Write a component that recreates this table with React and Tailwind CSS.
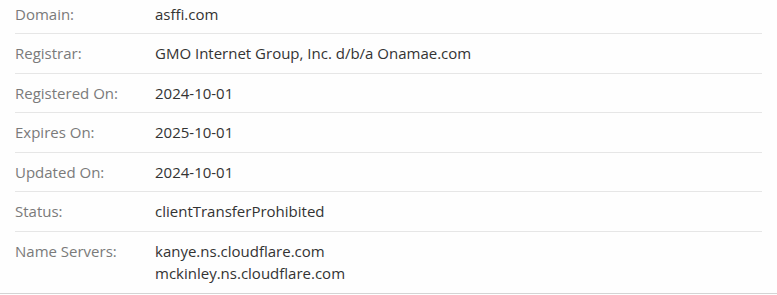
export default function App() {
  const rows = [
    ["Domain:", ["asffi.com"]],
    ["Registrar:", ["GMO Internet Group, Inc. d/b/a Onamae.com"]],
    ["Registered On:", ["2024-10-01"]],
    ["Expires On:", ["2025-10-01"]],
    ["Updated On:", ["2024-10-01"]],
    ["Status:", ["clientTransferProhibited"]],
    ["Name Servers:", ["kanye.ns.cloudflare.com", "mckinley.ns.cloudflare.com"]],
  ];
  return (
    <div
      className="w-[777px] bg-[#fefefe] border-b border-[#d4d4d4] text-[15px] leading-[1.5]"
      style={{ fontFamily: '"Open Sans", sans-serif' }}
    >
      <div className="px-[15px]">
        {rows.map(([label, values], i) => (
          <div
            key={label}
            className={
              "flex pb-2 " +
              (i === 0 ? "pt-[2.5px] " : "pt-2 ") +
              (i < rows.length - 1 ? "border-b border-[#e6e6e6]" : "")
            }
          >
            <div className="w-[140px] shrink-0 text-[#7a7a7a]">{label}</div>
            <div className="text-[#333333]">
              {values.map((v) => (
                <div key={v}>{v}</div>
              ))}
            </div>
          </div>
        ))}
      </div>
    </div>
  );
}
